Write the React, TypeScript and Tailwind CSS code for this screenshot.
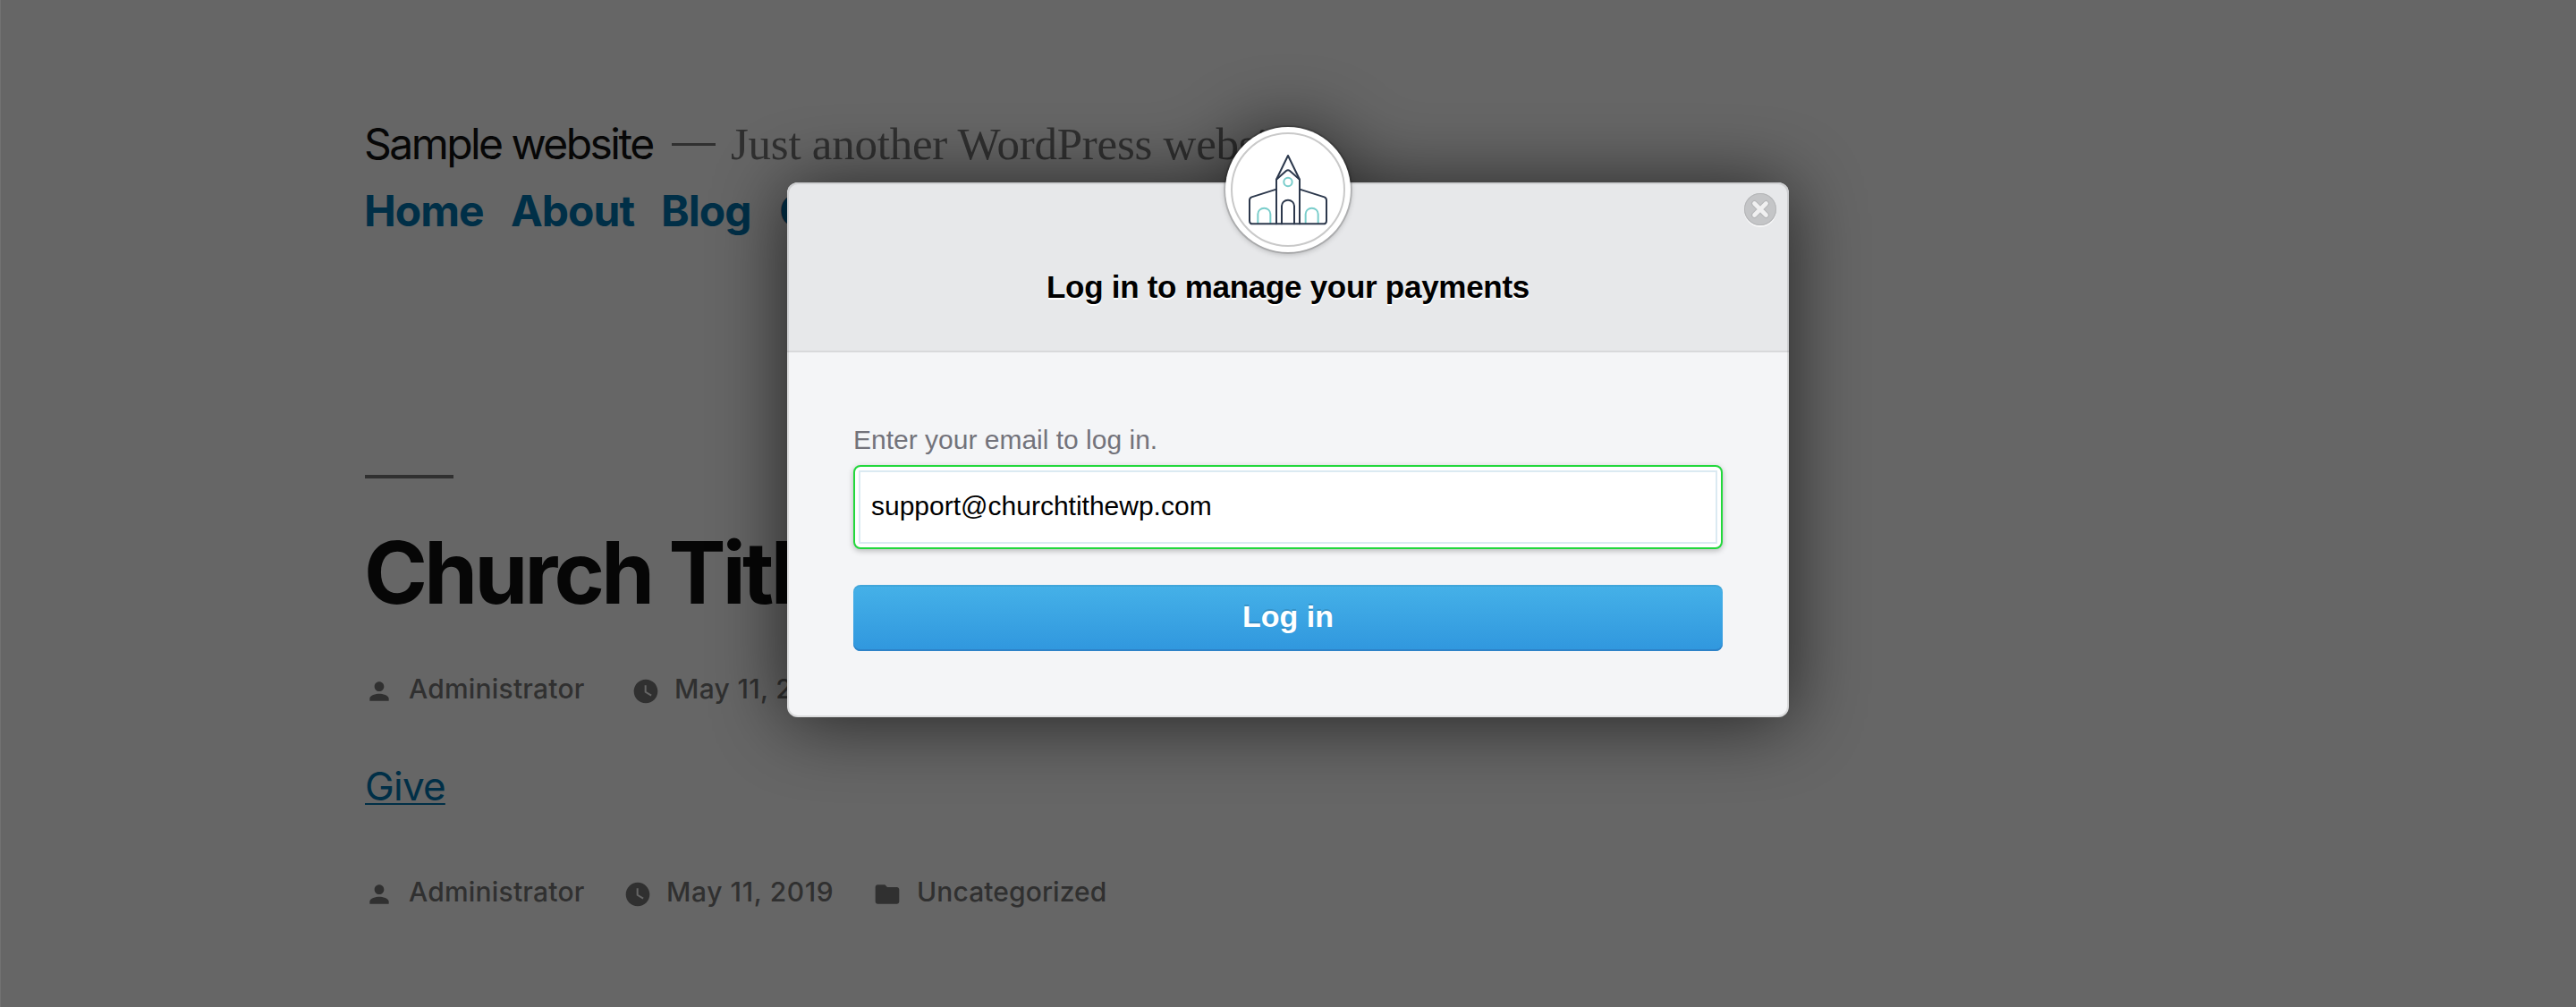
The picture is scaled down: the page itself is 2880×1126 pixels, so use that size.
import React from "react";

const PersonIcon = ({ className = "" }: { className?: string }) => (
  <svg viewBox="0 0 24 24" className={`size-8 shrink-0 fill-current ${className}`}>
    <path d="M12 12c2.21 0 4-1.79 4-4s-1.79-4-4-4-4 1.79-4 4 1.79 4 4 4zm0 2c-2.67 0-8 1.34-8 4v2h16v-2c0-2.66-5.33-4-8-4z" />
  </svg>
);

const ClockIcon = ({ className = "" }: { className?: string }) => (
  <svg viewBox="0 0 24 24" className={`size-8 shrink-0 fill-current ${className}`}>
    <path d="M12 2C6.5 2 2 6.5 2 12s4.5 10 10 10 10-4.5 10-10S17.5 2 12 2zm4.2 14.2L11 13V7h1.5v5.2l4.5 2.7-.8 1.3z" />
  </svg>
);

const FolderIcon = ({ className = "" }: { className?: string }) => (
  <svg viewBox="0 0 24 24" className={`size-8 shrink-0 fill-current ${className}`}>
    <path d="M10 4H4c-1.1 0-2 .9-2 2v12c0 1.1.9 2 2 2h16c1.1 0 2-.9 2-2V8c0-1.1-.9-2-2-2h-8l-2-2z" />
  </svg>
);

const ChurchLogo = () => (
  <svg viewBox="90 66 420 420" className="size-full" fill="none" strokeWidth="6" strokeLinejoin="round" strokeLinecap="round">
    <g stroke="#7acdcb">
      <path d="M199 388V358a21 20 0 0 1 42 0V388" />
      <path d="M359 388V358a21 20 0 0 1 42 0V388" />
      <circle cx="300" cy="250.500" r="14" />
    </g>
    <g stroke="#2c384c">
      <path d="M262 240 300 162 338 240" />
      <path d="M261 391V242L294 213Q300 208 306 213L339 242V391" />
      <path d="M261 275 178 301Q171 304 171 312V380Q171 391 182 391H418Q429 391 429 380V312Q429 304 422 301L339 275" />
      <path d="M279 391V331a21 20 0 0 1 42 0V391" />
    </g>
  </svg>
);

const SitePage = () => (
  <div className="flex flex-col items-start pl-[406px] pt-[128px] font-[Inter,sans-serif] text-[#303030]">
    <div className="flex h-[66px] items-baseline whitespace-nowrap leading-[66px]">
      <span className="w-[344px] text-[48px] tracking-[-2.55px] text-[#070707]">Sample website</span>
      <span className="mr-[17px] h-[3px] w-[49px] -translate-y-[15px] bg-[#303030]" />
      <span className="font-['Liberation_Serif',serif] text-[51px] tracking-[-0.25px]">Just another WordPress website</span>
    </div>
    <nav className="mt-[10px] flex h-[64px] whitespace-nowrap text-[48px] font-bold leading-[64px] tracking-[-1px] text-[#002f47]">
      <a className="w-[164px]">Home</a>
      <a className="w-[168px]">About</a>
      <a className="w-[132px]">Blog</a>
      <a>Contact</a>
    </nav>
    <div className="ml-px mt-[263px] h-1 w-[99px] bg-[#303030]" />
    <h1 className="mt-[45px] h-[120px] whitespace-nowrap text-[96px] font-bold leading-[120px] tracking-[-3.7px] text-[#060606]">
      Church Tithe WP
    </h1>
    <div className="mt-[50px] flex h-10 items-center whitespace-nowrap text-[30px] font-medium leading-10">
      <PersonIcon className="ml-px mr-[17px] translate-y-[3px]" />
      <span className="w-[249px] tracking-[0.2px]">Administrator</span>
      <ClockIcon className="mr-4 translate-y-[3px]" />
      <span className="tracking-[0.3px]">May 11, 2019</span>
    </div>
    <a className="ml-px mt-[59px] h-[60px] text-[44px] leading-[60px] tracking-[-0.8px] text-[#002f47] underline decoration-2 underline-offset-[3px]">
      Give
    </a>
    <div className="mt-[68px] flex h-10 items-center whitespace-nowrap text-[30px] font-medium leading-10">
      <PersonIcon className="ml-px mr-[17px] translate-y-[3px]" />
      <span className="w-[240px] tracking-[0.2px]">Administrator</span>
      <ClockIcon className="mr-4 translate-y-[3px]" />
      <span className="w-[231px] tracking-[0.6px]">May 11, 2019</span>
      <FolderIcon className="mr-[17px] translate-y-[3px]" />
      <span className="tracking-[0.1px]">Uncategorized</span>
    </div>
  </div>
);

const DialogShadow = () => (
  <div className="pointer-events-none absolute inset-0 opacity-66 blur-[42px]">
    <div className="absolute inset-0 translate-y-1 rounded-[12px] bg-black" />
    <div className="absolute left-[490px] top-[-58px] size-[140px] rounded-full bg-black" />
  </div>
);

const LoginDialog = () => (
  <div role="dialog" className="relative h-[598px] w-[1120px] font-['Liberation_Sans',sans-serif]">
    <DialogShadow />
    <div className="relative h-full rounded-[12px] bg-[#f4f5f7]">
      <header className="flex h-[190px] justify-center rounded-t-[12px] border-b-2 border-[#d8d9db] bg-[#e7e8ea] pt-[93px]">
        <h2 className="whitespace-nowrap text-[35px] font-bold leading-[48px] tracking-[-0.28px] text-black [text-shadow:0_2px_0_#fff]">
          Log in to manage your payments
        </h2>
      </header>
      <div className="flex flex-col px-[74px] pt-[76px]">
        <label className="h-[50px] text-[30px] leading-[44px] text-[#73737b]">Enter your email to log in.</label>
        <div className="h-[94px] rounded-[8px] border-2 border-[#22d83c] bg-white p-1 shadow-[0_2px_6px_rgba(0,0,0,0.25)]">
          <div className="flex h-[82px] items-center border-2 border-[#dbeaf2] px-3 pb-1 text-[30px] text-black">
            support@churchtithewp.com
          </div>
        </div>
        <button className="mt-10 h-[74px] rounded-[8px] bg-linear-to-b from-[#45b1e8] to-[#3097de] pb-1 text-[34px] font-bold leading-[70px] text-white shadow-[inset_0_2px_0_rgba(0,0,0,0.06),inset_0_-2px_0_#2d82c8] [text-shadow:0_-2px_0_rgba(0,0,0,0.15)]">
          Log in
        </button>
      </div>
      <div className="pointer-events-none absolute inset-0 rounded-[12px] border-2 border-black/10" />
    </div>
    <div className="absolute left-[490px] top-[-62px] size-[140px] rounded-full bg-white shadow-[0_0_0_2px_rgba(0,0,0,0.15),0_2px_6px_rgba(0,0,0,0.25)]">
      <div className="absolute inset-[6px] rounded-full border-2 border-[#c9c9c9]" />
      <ChurchLogo />
    </div>
    <button className="absolute right-[14px] top-3 size-9 rounded-full bg-[#c4c5c7] shadow-[inset_0_0_0_1px_#b5b6b8,0_2px_0_#f6f6f7]">
      <svg viewBox="0 0 36 36" className="size-9" fill="none" strokeLinecap="round">
        <path d="M11.500 11.500 24.500 24.500M24.500 11.500 11.500 24.500" stroke="#b7b8ba" strokeWidth="7" />
        <path d="M11.500 11.500 24.500 24.500M24.500 11.500 11.500 24.500" stroke="#f0f0f1" strokeWidth="4.600" />
      </svg>
    </button>
  </div>
);

export default function App() {
  return (
    <div className="relative h-[1126px] w-[2880px] overflow-hidden border-l border-[#727272] bg-[#666]">
      <SitePage />
      <div className="absolute inset-0 -left-px flex items-start justify-center pt-[204px]">
        <LoginDialog />
      </div>
    </div>
  );
}
